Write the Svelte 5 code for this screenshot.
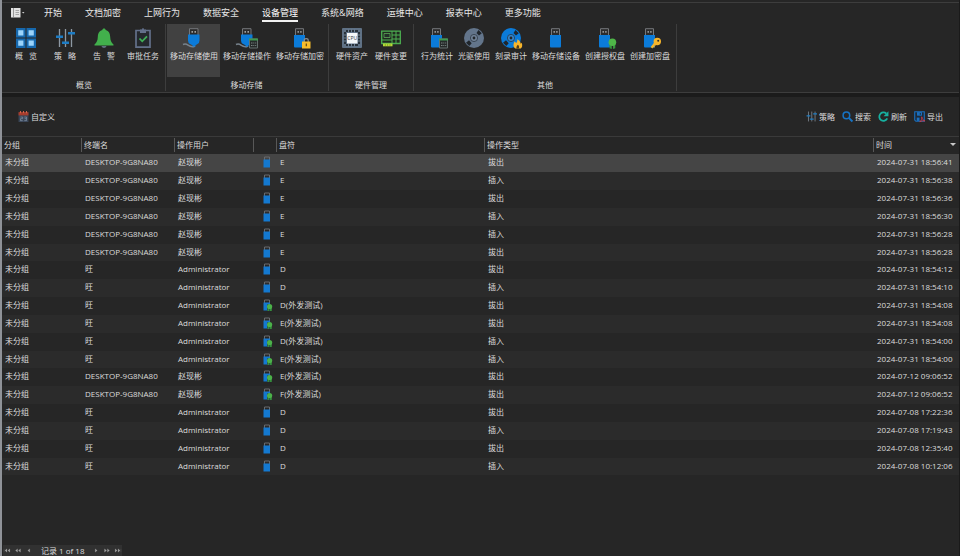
<script>
  const tabs = ['开始', '文档加密', '上网行为', '数据安全', '设备管理', '系统&网络', '运维中心', '报表中心', '更多功能'];
  let activeTab = $state('设备管理');

  const groups = [
    {
      title: '概览',
      kind: 'wide',
      items: [
        { icon: 'grid', label: '概\u2002 览' },
        { icon: 'sliders', label: '策\u2002 略' },
        { icon: 'bell', label: '告\u2002 警' },
        { icon: 'task', label: '审批任务' },
      ],
    },
    {
      title: '移动存储',
      kind: 'tight',
      items: [
        { icon: 'plug', label: '移动存储使用' },
        { icon: 'plugCalc', label: '移动存储操作' },
        { icon: 'usbLock', label: '移动存储加密' },
      ],
    },
    {
      title: '硬件管理',
      kind: 'wide',
      items: [
        { icon: 'cpu', label: '硬件资产' },
        { icon: 'board', label: '硬件变更' },
      ],
    },
    {
      title: '其他',
      kind: '',
      items: [
        { icon: 'usbCalc', label: '行为统计' },
        { icon: 'disc', label: '光驱使用' },
        { icon: 'burn', label: '刻录审计' },
        { icon: 'usb', label: '移动存储设备' },
        { icon: 'usbBadge', label: '创建授权盘' },
        { icon: 'usbKey', label: '创建加密盘' },
      ],
    },
  ];
  let activeTool = $state('移动存储使用');

  const zhao = ['DESKTOP-9G8NA80', '赵现彬'];
  const wang = ['旺', 'Administrator'];
  const records = [
    [zhao, 'E', '拔出', '2024-07-31 18:56:41'],
    [zhao, 'E', '插入', '2024-07-31 18:56:38'],
    [zhao, 'E', '拔出', '2024-07-31 18:56:36'],
    [zhao, 'E', '插入', '2024-07-31 18:56:30'],
    [zhao, 'E', '插入', '2024-07-31 18:56:28'],
    [zhao, 'E', '拔出', '2024-07-31 18:56:28'],
    [wang, 'D', '拔出', '2024-07-31 18:54:12'],
    [wang, 'D', '插入', '2024-07-31 18:54:10'],
    [wang, 'D(外发测试)', '拔出', '2024-07-31 18:54:08'],
    [wang, 'E(外发测试)', '拔出', '2024-07-31 18:54:08'],
    [wang, 'D(外发测试)', '插入', '2024-07-31 18:54:00'],
    [wang, 'E(外发测试)', '插入', '2024-07-31 18:54:00'],
    [zhao, 'E(外发测试)', '拔出', '2024-07-12 09:06:52'],
    [zhao, 'F(外发测试)', '拔出', '2024-07-12 09:06:52'],
    [wang, 'D', '拔出', '2024-07-08 17:22:36'],
    [wang, 'D', '插入', '2024-07-08 17:19:43'],
    [wang, 'D', '拔出', '2024-07-08 12:35:40'],
    [wang, 'D', '插入', '2024-07-08 10:12:06'],
  ];
  let selected = $state(0);
</script>

{#snippet stick(x)}
  <path d="M{x + 1.5} 7V.7h8V7" fill="#2b2b2b" stroke="#74777b" />
  <path d="M{x + 3.5} 3h1.4v1.8h-1.4zM{x + 6.2} 3h1.4v1.8h-1.4z" fill="#9a9da0" />
  <path d="M{x} 7h11v11.5q0 1-1 1h-9q-1 0-1-1z" fill="#0b7bd9" />
{/snippet}

{#snippet plug(x)}
  <path d="M{x - 5} 16.5c2-1 3.5-.5 5 .6s4 2.600 7 .9" fill="none" stroke="#77828c" stroke-width="1.5" />
  <path d="M{x + 1.5} 7V.7h8.500V7" fill="#2b2b2b" stroke="#74777b" />
  <path d="M{x + 3.5} 3h1.4v1.8h-1.4zM{x + 6.5} 3h1.4v1.8h-1.4z" fill="#a9acaf" />
  <path d="M{x} 6.500h11.500v6q0 2.500-2 3.500l-2 1.200v1.300h-3v-1.300l-2.500-1.200q-2-1-2-3.500z" fill="#0b7bd9" />
{/snippet}

{#snippet calc()}
  <path d="M12.5 11h8v9h-8z" fill="#262b2a" stroke="#64706f" />
  <path d="M12 10.5h9v2h-9z" fill="#3f9950" />
  <path d="M14 14.5h1.5v1H14zM16.3 14.5h1v1h-1zM18.2 14.5h1v1h-1zM14 17h1.5v1H14zM16.3 17h1v1h-1zM18.2 17h1v1h-1z" fill="#798583" />
{/snippet}

{#snippet discHoles()}
  <circle cx="10" cy="10" r="3.6" fill="#8c9cb0" fill-opacity=".35" stroke="#26303b" stroke-width=".7" />
  <circle cx="10" cy="10" r="1.4" fill="#22272c" />
  <path d="M12.500 5l2-3 3.300 3.300-2.800 2.200zM5 12.300l2.700 3-2.400 2.700-3.300-3.300z" fill="#20262c" />
{/snippet}

{#snippet slidersPaths(line)}
  <path d="M4.5 1v18M10.5 1v18M16.5 1v18" stroke={line} stroke-width="1.3" />
  <path d="M1 7.5h7V10H1zM7 13.5h7V16H7zM13 4h7v2.500h-7z" fill="#1d7cc4" />
{/snippet}

{#snippet icon(name)}
  <svg viewBox="0 0 20 20" aria-hidden="true">
    {#if name === 'grid'}
      <path d="M0 0h9.5v9.5H0zM10.5 0H20v9.5h-9.5zM0 10.5h9.5V20H0zM10.5 10.5H20V20h-9.5z" fill="#1668ad" />
      <path d="M2.2 2.2h5.2v5.2H2.2zM12.6 2.2h5.2v5.2h-5.2zM2.2 12.6h5.2v5.2H2.2zM12.6 12.6h5.2v5.2h-5.2z" fill="#9bd3fa" />
    {:else if name === 'sliders'}
      {@render slidersPaths('#8d98a3')}
    {:else if name === 'bell'}
      <path d="M10 .5c1 0 1.600.6 1.700 1.5C15 3 16 5.600 16.200 9c.2 3.600 1 5.500 3.300 7.500v1H.5v-1C2.800 14.500 3.600 12.600 3.800 9 4 5.600 5 3 8.300 2 8.400 1.100 9 .5 10 .5z" fill="#42b04c" />
      <path d="M7.5 18h5c-.3 1.300-1.300 2-2.500 2s-2.200-.7-2.500-2z" fill="#617080" />
    {:else if name === 'task'}
      <path d="M3 2.5h14v16.700H3z" fill="#24282d" stroke="#63708a" stroke-width="1.7" />
      <path d="M7 1.5h2q0-1.500 1-1.500t1 1.500h2V5H7z" fill="#63708a" />
      <path d="M6.500 10.500l2.700 2.800 4.800-5" fill="none" stroke="#3fae55" stroke-width="1.8" />
    {:else if name === 'plug'}
      {@render plug(4)}
    {:else if name === 'plugCalc'}
      {@render plug(4)}
      {@render calc()}
    {:else if name === 'usbLock'}
      {@render stick(4)}
      <path d="M14.200 14v-1.500q0-1.800 2-1.800t2 1.800V14" fill="none" stroke="#8a8f94" stroke-width="1.2" />
      <path d="M12 13.500h8.500v7H12z" fill="#f7bd2b" />
      <path d="M15.700 15.500h1.200v2.800h-1.200z" fill="#5c4717" />
    {:else if name === 'cpu'}
      <rect width="20" height="20" rx="1" fill="#5f7185" />
      <path d="M4 2h12v2H4zM4 16h12v2H4zM2 4h2v12H2zM16 4h2v12h-2z" fill="#29323b" />
      <path d="M6.500 1.500v3M9.500 1.500v3M12.500 1.500v3M6.500 15.500v3M9.500 15.500v3M12.500 15.500v3M1.500 7h3M1.500 10h3M1.500 13h3M15.500 7h3M15.500 10h3M15.500 13h3" stroke="#6d8094" />
      <path d="M5 5h10.500v10.500H5z" fill="#f5f7f9" />
      <text x="10.200" y="12" text-anchor="middle" font-size="5" fill="#333a42">CPU</text>
    {:else if name === 'board'}
      <path d="M.7 3.200h18.600v12.300H.7z" fill="#202a20" stroke="#4caf50" stroke-width="1.3" />
      <path d="M3 5.500h6v4H3z" fill="#23302a" stroke="#66b75d" stroke-width=".7" />
      <path d="M11 3v12.500M15 3v12.500M11 7h8M11 11h8M1 12h10" stroke="#4caf50" />
      <path d="M2 15.500h9.500v2.800H2z" fill="#b7d936" />
      <path d="M4.300 16v2M6.600 16v2M9 16v2" stroke="#6f8f25" stroke-width=".6" />
    {:else if name === 'usbCalc'}
      {@render stick(4)}
      {@render calc()}
    {:else if name === 'disc'}
      <circle cx="10" cy="10" r="10" fill="#63758b" />
      {@render discHoles()}
    {:else if name === 'burn'}
      <circle cx="10" cy="10" r="10" fill="#0b7bd9" />
      {@render discHoles()}
      <path d="M13.500 13.500c1 .4 1.300 1 1.500 1.800.9-1 1.500-2.300 1.300-4 2.500 1.200 3.300 3 3.300 4.500l1-1c1.200 2.600.6 4.600-.8 5.700h-5.600c-2-1.500-2.300-4-.7-7z" fill="#f8b62c" />
      <path d="M15.600 20.500c-.6-1.500.2-2.800 1.300-3.700 1.200 1 1.600 2.200.8 3.700z" fill="#574019" />
    {:else if name === 'usb'}
      {@render stick(4)}
    {:else if name === 'usbBadge'}
      {@render stick(4)}
      <path d="M14.500 16h2.300v5l-2.300-.8zM18 16h2.300v4.200L18 21z" fill="#38963f" />
      <circle cx="17.400" cy="14.300" r="3.800" fill="#4fb648" />
    {:else if name === 'usbKey'}
      {@render stick(4)}
      <path d="M16.500 13.500l-5 6.300" stroke="#f7b52a" stroke-width="2.2" />
      <path d="M12.500 17.500l2 1.800M14 15.500l2 1.700" stroke="#f7b52a" stroke-width="1.3" />
      <circle cx="17.300" cy="13.500" r="3.700" fill="#f7b52a" />
      <circle cx="18.200" cy="12.700" r="1" fill="#2b2b2b" />
    {:else if name === 'calendar'}
      <path d="M1 3h18v17H1z" fill="#3a4658" />
      <path d="M1 2h18v6H1z" fill="#a63c2c" />
      <path d="M4.500 0v4M10 0v4M15.500 0v4" stroke="#d2664f" stroke-width="1.8" />
      <path d="M4.500 11h4v3h-4v3.500h4M11.500 11h4v6.500h-4M12 14h3" fill="none" stroke="#8494a8" stroke-width="1.3" />
    {:else if name === 'search'}
      <circle cx="8" cy="8" r="6" fill="none" stroke="#1673c4" stroke-width="2.8" />
      <path d="M12.500 12.500l6.500 6.500" stroke="#1673c4" stroke-width="3.5" />
    {:else if name === 'refresh'}
      <path d="M16.800 13.500A7.600 7.600 0 1 1 15 4.600" fill="none" stroke="#17b0a0" stroke-width="3.2" />
      <path d="M19 .5v9h-9z" fill="#17b0a0" />
    {:else if name === 'export'}
      <path d="M1.300 1.300h17.400v17.400H3.500l-2.200-2.200z" fill="#1d2b3a" stroke="#1a6fbf" stroke-width="2" />
      <path d="M5.500 2h9v6.500h-9z" fill="#1a6fbf" />
      <path d="M10.500 3.500h2v3.500h-2z" fill="#20303f" />
      <path d="M5 12h5v6H5z" fill="#1a6fbf" />
      <path d="M10.500 19.500c3.500-3 4-6 3.500-9 1.500 5 3 7 6 7.500-3-.5-6 0-9.500 1.500z" fill="none" stroke="#d23a46" stroke-width="1.5" />
    {/if}
  </svg>
{/snippet}

{#snippet rowIcon(badge)}
  <svg class="row-icon" viewBox="0 0 10 12" aria-hidden="true">
    <path d="M2.500 4V1h5v3" fill="none" stroke="#686b6e" />
    <path d="M1.500 3.500h6.500v8H1.500z" fill="#1479d0" />
    {#if badge}
      <path d="M5 5.500h3v6H5z" fill="#25303a" />
      <path d="M5.500 8.500h1.800V12H5.500zM8 8.500h1.800V12H8z" fill="#358d3d" />
      <circle cx="7.600" cy="7.600" r="2.600" fill="#4cb24a" />
    {/if}
  </svg>
{/snippet}

<div class="window">
  <header>
    <nav class="tabs" aria-label="主菜单">
      <button class="app-menu" aria-label="菜单">
        <svg viewBox="0 0 14 10" aria-hidden="true">
          <path d="M0 0h9.500v9.500H0z" fill="#e2e2e2" />
          <path d="M2.500 0v9.500" stroke="#777" stroke-width=".7" />
          <path d="M4.500 2.500H8M4.500 4.500H8M4.500 6.500H8" stroke="#8a8a8a" stroke-width=".7" />
          <path d="M11 4h2.500l-1.250 1.500z" fill="#cfcfcf" />
        </svg>
      </button>
      {#each tabs as tab}
        <button class="tab" class:active={tab === activeTab} onclick={() => (activeTab = tab)}>{tab}</button>
      {/each}
    </nav>
    <div class="ribbon">
      {#each groups as group}
        <section class="group {group.kind}">
          <div class="tools">
            {#each group.items as item}
              <button class="tool" class:active={item.label === activeTool} onclick={() => (activeTool = item.label)}>
                {@render icon(item.icon)}
                <span>{item.label}</span>
              </button>
            {/each}
          </div>
          <h2>{group.title}</h2>
        </section>
      {/each}
    </div>
  </header>

  <main>
    <div class="toolbar">
      <button class="action">{@render icon('calendar')}自定义</button>
      <div class="actions">
        <button class="action">{@render icon('sliders')}策略</button>
        <button class="action">{@render icon('search')}搜索</button>
        <button class="action">{@render icon('refresh')}刷新</button>
        <button class="action">{@render icon('export')}导出</button>
      </div>
    </div>

    <table>
      <colgroup>
        <col class="c-group" /><col class="c-host" /><col class="c-user" /><col class="c-icon" /><col class="c-drive" /><col /><col class="c-time" />
      </colgroup>
      <thead>
        <tr>
          <th>分组</th>
          <th>终端名</th>
          <th>操作用户</th>
          <th aria-label="图标"></th>
          <th>盘符</th>
          <th>操作类型</th>
          <th><div class="sorted">时间<i></i></div></th>
        </tr>
      </thead>
      <tbody>
        {#each records as [who, drive, action, time], i}
          <tr class:selected={i === selected} onclick={() => (selected = i)}>
            <td>未分组</td>
            <td>{who[0]}</td>
            <td>{who[1]}</td>
            <td class="icon-cell">{@render rowIcon(drive.length > 1)}</td>
            <td>{drive}</td>
            <td>{action}</td>
            <td>{time}</td>
          </tr>
        {/each}
      </tbody>
    </table>
  </main>

  <footer>
    <div class="pager">
      <button aria-label="第一条"><svg viewBox="0 0 8 6"><path d="M.5 1v4M4 1v4L1.500 3zM7.500 1v4L5 3z" /></svg></button>
      <button aria-label="上一页"><svg viewBox="0 0 8 6"><path d="M3.500 1v4L1 3zM7 1v4L4.500 3z" /></svg></button>
      <button aria-label="上一条"><svg viewBox="0 0 8 6"><path d="M5 1v4L2.500 3z" /></svg></button>
      <span>记录 1 of 18</span>
      <button aria-label="下一条"><svg viewBox="0 0 8 6"><path d="M3 1v4L5.500 3z" /></svg></button>
      <button aria-label="下一页"><svg viewBox="0 0 8 6"><path d="M1 1v4L3.500 3zM4.500 1v4L7 3z" /></svg></button>
      <button aria-label="最后一条"><svg viewBox="0 0 8 6"><path d="M.5 1v4L3 3zM4 1v4L6.500 3zM7.500 1v4" /></svg></button>
    </div>
  </footer>
</div>

<style>
  :global(body) {
    background: #262626;
  }
  .window {
    box-sizing: border-box;
    min-height: 100vh;
    display: flex;
    flex-direction: column;
    border-left: 2px solid #8f9298;
    border-right: 1px solid #1a1a1a;
    background: #262626;
    color: #dcdcdc;
    font: 8px/12px 'Open Sans', 'Noto Sans CJK SC', sans-serif;
  }
  button {
    border: 0;
    margin: 0;
    padding: 0;
    background: none;
    color: inherit;
    font: inherit;
    white-space: nowrap;
    cursor: pointer;
  }
  svg {
    display: block;
    overflow: visible;
    flex: none;
  }
  header {
    padding-top: 2px;
    border-bottom: 4px solid #1b1b1b;
  }
  .tabs {
    display: flex;
    gap: 23px;
    height: 20px;
    padding-left: 9px;
    border-top: 1px solid #3d3d3d;
    font-size: 9px;
    line-height: 16px;
  }
  .app-menu {
    width: 10px;
  }
  .app-menu svg {
    width: 14px;
    height: 10px;
  }
  .tab {
    height: 19px;
    padding-top: 2px;
    border-bottom: 2px solid transparent;
    color: #e6e6e6;
  }
  .tab.active {
    border-color: #f2f2f2;
    color: #fff;
  }
  .ribbon {
    display: flex;
    padding: 1px 0 1px 1px;
    border-bottom: 1px solid #3d3d3d;
  }
  .group {
    padding: 0 4px;
    border-right: 1px solid #3d3d3d;
  }
  .group.wide {
    padding: 0 3px;
  }
  .group.tight {
    padding: 0 2px 0 1px;
  }
  .tools {
    display: flex;
  }
  .tool {
    display: flex;
    flex-direction: column;
    align-items: center;
    height: 53px;
    padding: 4px 2px 0 3px;
    gap: 2px;
  }
  .wide .tool {
    width: 39px;
  }
  .tool.active {
    background: #414141;
  }
  .tool svg {
    width: 20px;
    height: 20px;
  }
  h2 {
    margin: 2px 0 0;
    text-align: center;
    font-size: 8px;
    font-weight: 400;
    line-height: 12px;
  }
  main {
    flex: 1;
  }
  .toolbar,
  .actions,
  .action {
    display: flex;
    align-items: center;
  }
  .toolbar {
    justify-content: space-between;
    height: 39px;
    padding: 0 16px;
  }
  .actions {
    gap: 7px;
  }
  .action {
    gap: 2px;
  }
  .action svg {
    width: 11px;
    height: 11px;
  }
  table {
    width: 100%;
    table-layout: fixed;
    border-collapse: collapse;
    border-top: 1px solid #3a3a3a;
  }
  .c-group { width: 80px; }
  .c-host { width: 93px; }
  .c-user { width: 79px; }
  .c-icon { width: 23px; }
  .c-drive { width: 208px; }
  .c-time { width: 85px; }
  th,
  td {
    height: 16px;
    padding: 0 0 2px 3px;
    text-align: left;
    font-weight: 400;
    white-space: nowrap;
    line-height: 12px;
  }
  th {
    height: 15px;
    padding-left: 2px;
    background: linear-gradient(#585858, #585858) right 0 bottom 2px / 1px 14px no-repeat;
  }
  th:last-child {
    background: none;
  }
  tbody tr:nth-child(even) {
    background: #2b2b2b;
  }
  tbody tr:nth-child(6n) td {
    height: 15px;
  }
  tbody tr.selected {
    background: #454545;
  }
  .icon-cell {
    padding-left: 8px;
  }
  .row-icon {
    width: 10px;
    height: 12px;
  }
  .sorted {
    display: flex;
    align-items: center;
    justify-content: space-between;
    padding-right: 3px;
  }
  .sorted i {
    border: 3px solid transparent;
    border-top-color: #c8c8c8;
    border-bottom-width: 0;
  }
  footer {
    display: flex;
    padding-left: 1px;
  }
  .pager {
    display: flex;
    align-items: center;
    gap: 3px;
    height: 11px;
    background: #313131;
  }
  .pager span {
    padding: 0 5px;
  }
  .pager svg {
    width: 8px;
    height: 5px;
    fill: #a0a0a0;
    stroke: #a0a0a0;
    stroke-width: 0.2;
  }
</style>
